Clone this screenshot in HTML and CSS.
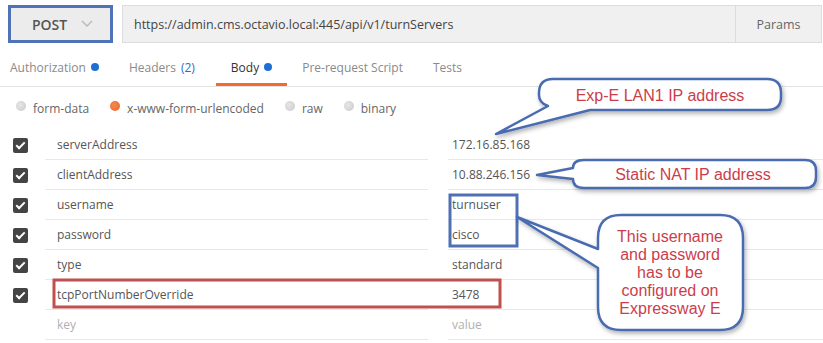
FILE: index.html
```html
<!DOCTYPE html>
<html lang="en">
<head>
  <meta charset="UTF-8" />
  <title>turnServers request</title>
  <link rel="stylesheet" href="styles.css">
</head>
<body>
  <div class="page">
    <div class="url-bar">
      <div class="method">
        <span>POST</span>
        <svg class="chevron" width="12" height="8" viewBox="0 0 12 8"><path d="M1 1 L6 6 L11 1" fill="none" stroke="#b8b8b8" stroke-width="1.4"/></svg>
      </div>
      <div class="url-group">
        <div class="url">https://admin.cms.octavio.local:445/api/v1/turnServers</div>
        <div class="params">Params</div>
      </div>
    </div>

    <div class="tabs">
      <div class="tab">Authorization <i class="dot"></i></div>
      <div class="tab headers">Headers <span class="count">(2)</span></div>
      <div class="tab active">Body <i class="dot"></i></div>
      <div class="tab">Pre-request Script</div>
      <div class="tab">Tests</div>
    </div>

    <div class="modes">
      <label class="mode"><i class="radio"></i>form-data</label>
      <label class="mode"><i class="radio on"></i>x-www-form-urlencoded</label>
      <label class="mode"><i class="radio"></i>raw</label>
      <label class="mode"><i class="radio"></i>binary</label>
    </div>

    <div class="rows">
      <div class="row"><i class="check"></i><div class="key">serverAddress</div><div class="val">172.16.85.168</div></div>
      <div class="row"><i class="check"></i><div class="key">clientAddress</div><div class="val">10.88.246.156</div></div>
      <div class="row"><i class="check"></i><div class="key">username</div><div class="val">turnuser</div></div>
      <div class="row"><i class="check"></i><div class="key">password</div><div class="val">cisco</div></div>
      <div class="row"><i class="check"></i><div class="key">type</div><div class="val">standard</div></div>
      <div class="row"><i class="check"></i><div class="key">tcpPortNumberOverride</div><div class="val">3478</div></div>
      <div class="row empty"><span class="nocheck"></span><div class="key">key</div><div class="val">value</div></div>
    </div>
  </div>

  <svg class="notes" width="823" height="343" viewBox="0 0 823 343">
    <defs>
      <filter id="shadow" x="-10%" y="-10%" width="130%" height="140%">
        <feDropShadow dx="1.5" dy="2.5" stdDeviation="2" flood-color="#000" flood-opacity="0.3"/>
      </filter>
    </defs>

    <rect x="54" y="280" width="446" height="27" fill="none" stroke="#c0504d" stroke-width="3"/>
    <rect x="450" y="195" width="67" height="51" fill="none" stroke="#4f70b4" stroke-width="3"/>

    <g filter="url(#shadow)" fill="#fff" stroke="#4a6cb1" stroke-width="2.5" stroke-linejoin="round">
      <path d="M553,79 H767 Q781,79 781,93 V97 Q781,110 767,110 H590 L496,134 L548,106 Q539,103 539,95 V93 Q539,79 553,79 Z"/>
      <path d="M584,160 H805 Q816,160 816,171 V177 Q816,188 805,188 H584 Q573,188 573,179 L537,175 L573,168 Q573,160 584,160 Z"/>
      <path d="M621,215 H720 Q743,215 743,238 V307 Q743,330 720,330 H621 Q598,330 598,307 V268 L517,217 L598,249 V238 Q598,215 621,215 Z"/>
    </g>

    <g class="note-text" text-anchor="middle">
      <text x="660" y="101">Exp-E LAN1 IP address</text>
      <text x="693" y="180">Static NAT IP address</text>
      <text x="670" y="242">This username</text>
      <text x="670" y="260">and password</text>
      <text x="670" y="278">has to be</text>
      <text x="670" y="296">configured on</text>
      <text x="670" y="314">Expressway E</text>
    </g>
  </svg>
</body>
</html>
```

FILE: styles.css
```css
* {
  margin: 0;
  padding: 0;
  box-sizing: border-box;
}

html, body {
  width: 100%;
  height: 100%;
  overflow: hidden;
  background: #fff;
  font-family: "Open Sans", "Noto Sans", sans-serif;
  font-size: 12px;
  color: #505050;
}

body {
  position: relative;
}

.page {
  padding-top: 5px;
}

.url-bar {
  display: flex;
  align-items: stretch;
  height: 38px;
  padding-left: 8px;
  gap: 9px;
}

.method {
  width: 105px;
  display: flex;
  align-items: center;
  justify-content: center;
  gap: 14px;
  background: #ececec;
  border: 3px solid #5072b7;
  font-size: 14px;
  font-weight: 600;
  color: #555;
  padding-left: 4px;
}

.url-group {
  flex: 1;
  display: flex;
  padding-right: 1px;
}

.url {
  flex: 1;
  display: flex;
  align-items: center;
  background: #f0f0f0;
  border: 1px solid #dcdcdc;
  border-right: none;
  padding-left: 11px;
  font-size: 12.5px;
  color: #444;
}

.params {
  width: 87px;
  display: flex;
  align-items: center;
  justify-content: center;
  background: #f0f0f0;
  border: 1px solid #dcdcdc;
  font-size: 12.5px;
  color: #666;
}

.tabs {
  display: flex;
  height: 44px;
  margin-left: -5px;
  border-bottom: 1px solid #e2e2e2;
}

.tab {
  display: flex;
  align-items: center;
  gap: 5px;
  padding: 8px 15px 0;
  color: #8a8a8a;
  border-bottom: 3px solid transparent;
}

.tab.headers {
  padding-right: 21px;
}

.tab.active {
  color: #333;
  border-bottom-color: #f26b2c;
}

.count {
  color: #2b6cc4;
}

.dot {
  display: inline-block;
  width: 8px;
  height: 8px;
  border-radius: 50%;
  background: #1d6fd1;
}

.mode,
.tab,
.url {
  white-space: nowrap;
}

.modes {
  display: flex;
  align-items: center;
  height: 43px;
  padding-left: 16px;
}

.mode {
  display: flex;
  align-items: center;
  gap: 7px;
  color: #666;
  margin-right: 21px;
}

.radio {
  width: 10px;
  height: 10px;
  border-radius: 50%;
  background: radial-gradient(circle at 40% 40%, #e6e6e6, #c9c9c9);
  margin-top: -5px;
}

.radio.on {
  background: radial-gradient(circle at 40% 40%, #f58a4f, #e8622a);
}

.rows {
  display: flex;
  flex-direction: column;
}

.row {
  display: grid;
  grid-template-columns: 45px 383px 1fr;
  height: 30px;
  align-items: stretch;
}

.check {
  align-self: center;
  justify-self: start;
  margin-left: 13px;
  width: 15px;
  height: 15px;
  border-radius: 2px;
  background: #444;
  position: relative;
}

.check::after {
  content: "";
  position: absolute;
  left: 5px;
  top: 2px;
  width: 3px;
  height: 7px;
  border: solid #fff;
  border-width: 0 2px 2px 0;
  transform: rotate(45deg);
}

.key,
.val {
  display: flex;
  align-items: center;
  border-bottom: 1px solid #e8e8e8;
  color: #555;
}

.key {
  padding-left: 12px;
}

.val {
  margin-left: 20px;
  padding-left: 4px;
}

.row.empty .key,
.row.empty .val {
  color: #b0b0b0;
}

.notes {
  position: absolute;
  top: 0;
  left: 0;
}

.note-text {
  font-family: "Liberation Sans", Arial, sans-serif;
  font-size: 16px;
  fill: #cc3d4c;
}
```
